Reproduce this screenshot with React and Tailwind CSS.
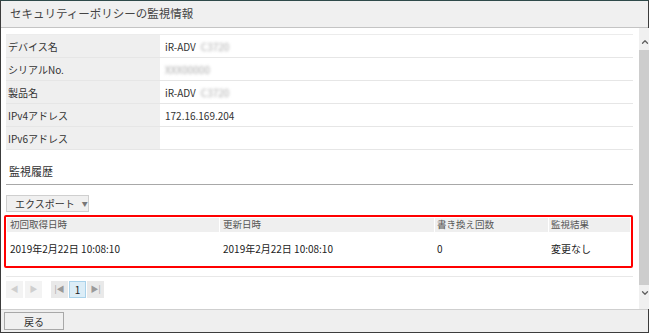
import { ChevronDown, ChevronUp } from 'lucide-react'

const FONT = { fontFamily: '"Noto Sans CJK JP", "Noto Sans", sans-serif' }

const INFO_ROWS = [
  { label: 'デバイス名', value: 'iR-ADV', blur: 'C3720' },
  { label: 'シリアルNo.', value: '', blur: 'XXX00000' },
  { label: '製品名', value: 'iR-ADV', blur: 'C3720' },
  { label: 'IPv4アドレス', value: '172.16.169.204' },
  { label: 'IPv6アドレス', value: '' },
]

function Blurred({ children, spaced }) {
  return (
    <span className={`${spaced ? 'ml-[5px]' : ''} inline-block text-[#a8a8a8] blur-[1.4px]`}>{children}</span>
  )
}

function PageBtn({ children, className }) {
  return (
    <div className={`w-[17px] h-[17px] flex items-center justify-center ${className}`}>
      {children}
    </div>
  )
}

export default function App() {
  return (
    <div
      style={FONT}
      className="w-[649px] h-[333px] flex flex-col bg-white text-[#333] border border-[#3c3c3c] border-t-[#2f4a4a]"
    >
      {/* Title */}
      <div className="h-[27px] shrink-0 bg-[#f0f0f0] border-b border-[#c4c4c4] flex items-center pl-[9px] text-[11.5px] text-[#444]">
        セキュリティーポリシーの監視情報
      </div>

      {/* Body */}
      <div className="flex-1 flex min-h-0">
        <div className="flex-1 pl-[5px] pr-[6px] pt-[6px]">
          {/* Info table */}
          <div className="border-t border-[#ececec]">
            {INFO_ROWS.map((r) => (
              <div key={r.label} className="h-[23px] flex border-b border-[#e6e6e6] text-[10px]">
                <div className="w-[154px] bg-[#efefef] flex items-center pl-[2px]">{r.label}</div>
                <div className="flex-1 flex items-center pl-[5px]">
                  {r.value}
                  {r.blur && <Blurred spaced={!!r.value}>{r.blur}</Blurred>}
                </div>
              </div>
            ))}
          </div>

          {/* History */}
          <div className="mt-[13px] pb-[4px] pl-[3px] text-[11px] border-b border-[#a8a8a8]">監視履歴</div>

          <div className="mt-[10px] w-[83px] h-[17px] bg-[#f0f0f0] border border-[#cfcfcf] flex items-center pl-[8px] text-[10px] whitespace-nowrap">
            エクスポート
            <span className="ml-[7px] text-[6px] text-[#777]">▼</span>
          </div>

          <div className="mt-[3px] -ml-[2px] w-[629px] border-2 border-[#ff0000] rounded-[2px] p-[1px] text-[9.5px]">
            <div className="h-[14px] flex bg-[#efefef] text-[#555]">
              <div className="w-[213px] border-r border-white pl-[3px] flex items-center">初回取得日時</div>
              <div className="w-[215px] border-r border-white pl-[3px] flex items-center">更新日時</div>
              <div className="w-[114px] border-r border-white pl-[2px] flex items-center">書き換え回数</div>
              <div className="flex-1 pl-[2px] flex items-center">監視結果</div>
            </div>
            <div className="h-[33px] flex items-center text-[10px] text-[#222]">
              <div className="w-[213px] pl-[3px]">2019年2月22日 10:08:10</div>
              <div className="w-[215px] pl-[3px]">2019年2月22日 10:08:10</div>
              <div className="w-[114px] pl-[2px]">0</div>
              <div className="flex-1 pl-[2px]">変更なし</div>
            </div>
          </div>

          <div className="mt-[8px] border-t border-[#e8e8e8] pt-[4px] flex items-center">
            <div className="flex gap-[2px]">
              <PageBtn className="bg-[#f3f3f3] text-[#cfcfcf] text-[8px]">◀</PageBtn>
              <PageBtn className="bg-[#f3f3f3] text-[#cfcfcf] text-[8px]">▶</PageBtn>
            </div>
            <div className="flex ml-[9px] gap-px">
              <PageBtn className="bg-[#e9e9e9] text-[#9a9a9a] text-[8px]">|◀</PageBtn>
              <PageBtn className="bg-[#dcedf7] border border-[#a9d2ea] text-[10px] text-[#222]">1</PageBtn>
              <PageBtn className="bg-[#e9e9e9] text-[#9a9a9a] text-[8px]">▶|</PageBtn>
            </div>
          </div>
        </div>

        {/* Scrollbar */}
        <div className="w-[12px] shrink-0 bg-[#f0f0f0] flex flex-col items-center pt-[9px] pb-[11px]">
          <ChevronUp size={10} strokeWidth={3} className="text-[#606060]" />
          <div className="w-full flex-1 bg-[#cdcdcd] mt-[3px] mb-[3px]" />
          <ChevronDown size={10} strokeWidth={3} className="text-[#606060]" />
        </div>
      </div>

      {/* Footer */}
      <div className="h-[23px] shrink-0 bg-[#efefef] border-t border-[#cfcfcf] flex items-center pl-[3px]">
        <div className="w-[60px] h-[18px] bg-[#f0f0f0] border border-[#a8a8a8] flex items-center justify-center text-[10px]">
          戻る
        </div>
      </div>
    </div>
  )
}
